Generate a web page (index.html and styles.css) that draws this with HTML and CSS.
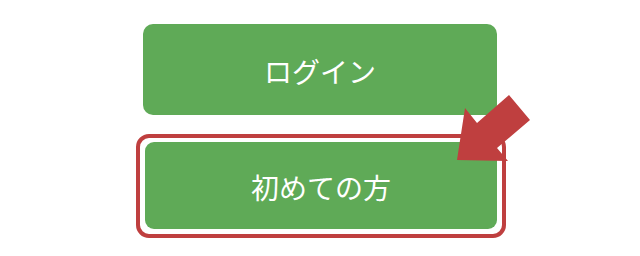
FILE: index.html
```html
<!DOCTYPE html>
<html lang="ja">
<head>
    <meta charset="UTF-8">
    <meta name="viewport" content="width=device-width, initial-scale=1.0">
    <title>ログイン</title>
    <link rel="stylesheet" href="styles.css">
</head>
<body>
    <div class="login-box">
        <a href="#" class="green-btn login-btn">ログイン</a>

        <div class="highlight">
            <a href="#" class="green-btn first-btn">初めての方</a>
        </div>

        <!-- pointer arrow drawn over the buttons -->
        <svg class="arrow" width="640" height="256" viewBox="0 0 640 256">
            <polygon points="509,95 530,120 497,148 508,161 457,160 465,108 477,123" fill="#bf3f3f"/>
        </svg>
    </div>
</body>
</html>
```

FILE: styles.css
```css
body {
    margin: 0;
    background-color: white;
    font-family: "Noto Sans CJK JP", "Noto Sans", sans-serif;
}

.login-box {
    position: relative;
    width: 640px;
    height: 256px;
    display: flex;
    flex-direction: column;
    align-items: flex-start;
    padding-top: 24px;
    box-sizing: border-box;
}

.green-btn {
    display: flex;
    align-items: center;
    justify-content: center;
    background-color: #5faa57;
    color: white;
    font-size: 28px;
    font-weight: 400;
    text-decoration: none;
    border-radius: 10px;
}

.login-btn {
    margin-left: 143px;
    width: 354px;
    height: 91px;
    padding-top: 2px;
    box-sizing: border-box;
}

.highlight {
    margin-left: 136px;
    margin-top: 19px;
    width: 370px;
    height: 104px;
    box-sizing: border-box;
    border: 4px solid #bf3f3f;
    border-radius: 13px;
    padding: 4px 5px 5px 5px;
    background-color: white;
}

.first-btn {
    width: 100%;
    height: 100%;
    border-radius: 9px;
    padding-top: 2px;
    box-sizing: border-box;
}

.arrow {
    position: absolute;
    left: 0;
    top: 0;
}
```
